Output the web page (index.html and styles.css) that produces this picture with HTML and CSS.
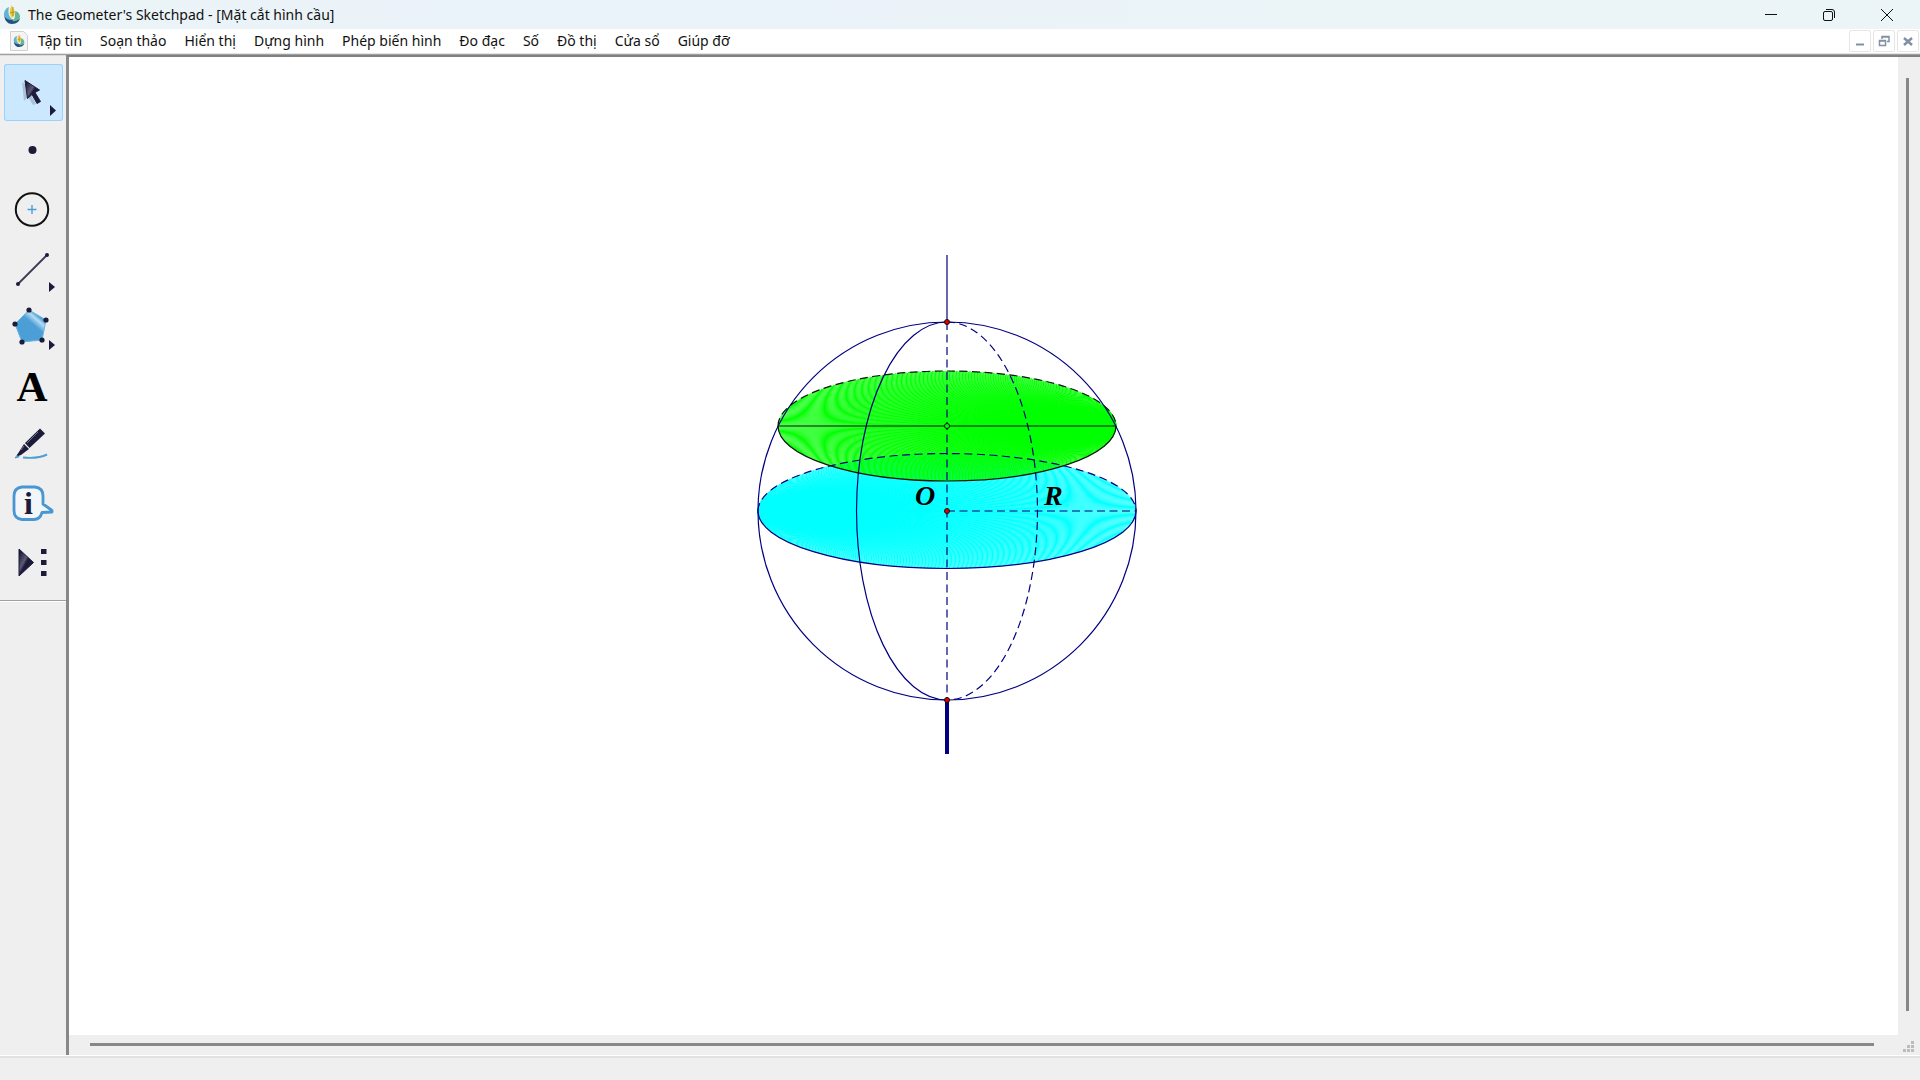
FILE: index.html
```html
<!DOCTYPE html>
<html lang="vi">

<head>
    <meta charset="UTF-8">
    <meta name="viewport" content="width=device-width, initial-scale=1.0">
    <title>The Geometer's Sketchpad - [Mặt cắt hình cầu]</title>
    <link rel="stylesheet" href="styles.css">
</head>

<body>
    <svg class="defs" width="0" height="0" aria-hidden="true">
        <defs>
            <linearGradient id="dark" x1="0" y1="0" x2="1" y2="1">
                <stop offset="0.1" stop-color="#1d1b3a" />
                <stop offset="0.4" stop-color="#5d5c72" />
                <stop offset="0.5" stop-color="#1d1b3a" />
            </linearGradient>
            <linearGradient id="penta" x1="0.9" y1="0" x2="0.4" y2="0.6">
                <stop offset="0.3" stop-color="#4c9fd6" />
                <stop offset="0.45" stop-color="#b5dcf3" />
                <stop offset="0.7" stop-color="#4c9fd6" />
            </linearGradient>
            <symbol id="logo" viewBox="0 0 18 20">
                <path d="M2 8C0 14 4 19 9 19c5 0 8-3 8-7 0 2-3 4-6 3C7 14 4 12 2 8z" fill="#24507f" />
                <path d="M1 9c0-3 2-6 5-7-1 5-1 9 4 13C5 15 1 13 1 9z" fill="#63b3d3" />
                <path d="M11 6c4 0 6 3 6 6-1 3-4 5-8 4 3-2 4-5 2-10z" fill="#62b79a" />
                <path d="M9 0c-3 5-3 9 0 13 2-1 3-3 2-6l2 2c-1-4-4-5-4-9z" fill="#efcc30" />
                <path d="M7 8l4-1M10 2v9" stroke="#b49224" fill="none" />
            </symbol>
        </defs>
    </svg>

    <header class="title-bar">
        <svg class="app-icon" width="18" height="20"><use href="#logo" /></svg>
        <h1>The Geometer's Sketchpad - [Mặt cắt hình cầu]</h1>
        <div class="window-buttons">
            <button type="button" aria-label="Minimize">
                <svg width="14" height="14" viewBox="0 0 14 14"><path d="M1 6.5h12" /></svg>
            </button>
            <button type="button" aria-label="Restore">
                <svg width="14" height="14" viewBox="0 0 14 14">
                    <rect x="1.5" y="3.5" width="9" height="9" rx="1.5" />
                    <path d="M4 1.5h6a2.5 2.5 0 0 1 2.5 2.5v6" />
                </svg>
            </button>
            <button type="button" aria-label="Close">
                <svg width="14" height="14" viewBox="0 0 14 14"><path d="M1 1l12 12M13 1L1 13" /></svg>
            </button>
        </div>
    </header>

    <nav class="menu-bar">
        <svg class="doc-icon" width="18" height="20" viewBox="0 0 18 20">
            <path d="M.5.5h13l4 4v15H.5z" fill="#f4f4f4" stroke="#d0d0d0" />
            <use href="#logo" x="3" y="3" width="12" height="14" />
        </svg>
        <button type="button">Tập tin</button>
        <button type="button">Soạn thảo</button>
        <button type="button">Hiển thị</button>
        <button type="button">Dựng hình</button>
        <button type="button">Phép biến hình</button>
        <button type="button">Đo đạc</button>
        <button type="button">Số</button>
        <button type="button">Đồ thị</button>
        <button type="button">Cửa sổ</button>
        <button type="button">Giúp đỡ</button>
        <div class="doc-buttons">
            <button type="button" aria-label="Thu nhỏ">
                <svg width="12" height="12" viewBox="0 0 12 12"><path d="M2 9.5h8" stroke-width="2" /></svg>
            </button>
            <button type="button" aria-label="Khôi phục">
                <svg width="12" height="12" viewBox="0 0 12 12">
                    <path d="M4 4V1.5h7v5H9M1.5 5.5h6v5h-6zM1 6h7M4 2h7" stroke-width="1.5" />
                </svg>
            </button>
            <button type="button" aria-label="Đóng">
                <svg width="12" height="12" viewBox="0 0 12 12"><path d="M2 3l8 7M10 3l-8 7" stroke-width="2.5" /></svg>
            </button>
        </div>
    </nav>

    <main class="workspace">
        <aside class="toolbox">
            <div class="tools">
                <button type="button" class="active" aria-label="Chọn">
                    <svg viewBox="0 0 59 57">
                        <path class="shadow" d="M18 18l13 10-4 3 5 9-3 1-5-8-4 4z" />
                        <path d="M21 16.5l14.5 9.5-4.5 2.5 5.5 9-3.5 2-5-9-4.5 4z" fill="url(#dark)" stroke="#1d1b3a" />
                        <path class="ink" d="M46 41l6 5.5-6 5.5z" />
                    </svg>
                </button>
                <button type="button" aria-label="Điểm">
                    <svg viewBox="0 0 59 57"><circle class="ink" cx="28.5" cy="27" r="4" /></svg>
                </button>
                <button type="button" aria-label="Đường tròn">
                    <svg viewBox="0 0 59 57">
                        <circle cx="28" cy="27.5" r="16.2" fill="none" stroke="#111" stroke-width="2" />
                        <path d="M23.5 27.5h9M28 23v9" stroke="#4c9fd6" stroke-width="1.4" />
                    </svg>
                </button>
                <button type="button" aria-label="Đoạn thẳng">
                    <svg viewBox="0 0 59 57">
                        <path d="M14 43l29-29" stroke="#3b3956" stroke-width="1.8" />
                        <circle class="ink" cx="14" cy="43" r="2" />
                        <circle class="ink" cx="43" cy="14" r="2" />
                        <path class="ink" d="M45 41l6 5-6 5z" />
                    </svg>
                </button>
                <button type="button" aria-label="Đa giác">
                    <svg viewBox="0 0 59 57">
                        <path d="M25 10l17 10-4 20-20 2-7-18z" fill="url(#penta)" stroke="#6bb2e0" />
                        <circle class="ink" cx="25" cy="10" r="2.6" />
                        <circle class="ink" cx="42" cy="20" r="2.6" />
                        <circle class="ink" cx="38" cy="40" r="2.6" />
                        <circle class="ink" cx="18" cy="42" r="2.6" />
                        <circle class="ink" cx="11" cy="24" r="2.6" />
                        <path class="ink" d="M45 40l6 5-6 5z" />
                    </svg>
                </button>
                <button type="button" aria-label="Văn bản">
                    <svg viewBox="0 0 59 57"><text class="letter" x="28" y="42" font-size="43">A</text></svg>
                </button>
                <button type="button" aria-label="Bút đánh dấu">
                    <svg viewBox="0 0 59 57">
                        <path d="M19 39.5c10 1 18 0 24-3" fill="none" stroke="#4c9fd6" stroke-width="2" />
                        <path d="M14 36l-3 4 4-1z" fill="#4c9fd6" stroke="#4c9fd6" />
                        <path class="ink" d="M36 10.500l5 5L25.5 30 21 25z" />
                        <path class="ink" d="M20 26l5 5-8 6-3 1-1-1z" />
                        <path d="M34 14L23 25M20 28l-3 4" stroke="#77768a" />
                    </svg>
                </button>
                <button type="button" aria-label="Thông tin">
                    <svg viewBox="0 0 59 57">
                        <path d="M18 10h13q8 1 8 9v8l9 6.5v1.5l-10 .5q-2 7-8 7H18q-8-1-8-9V19q0-8 8-9z" fill="#f3f6f8" stroke="#4896d2" stroke-width="2.8" stroke-linejoin="round" />
                        <text class="letter info" x="24.5" y="37" font-size="32">i</text>
                    </svg>
                </button>
                <button type="button" aria-label="Công cụ tùy chọn">
                    <svg viewBox="0 0 59 57">
                        <path d="M15 13l14.5 13.5L15 40z" fill="url(#dark)" stroke="#1d1b3a" />
                        <path class="ink" d="M37 13h5.5v5H37zM37 24h5.5v5H37zM37 35h5.5v5H37z" />
                    </svg>
                </button>
            </div>
        </aside>

        <section class="document">
            <svg class="sketch" role="img" aria-label="Mặt cắt hình cầu">
                <!-- origin is the centre O of the sphere -->
                <g transform="translate(878 454)">
                    <g id="cyanDisk" class="cyan"></g>
                    <g class="navy">
                        <path d="M-189 0a189 57.500 0 0 0 378 0" />
                    </g>
                    <g id="greenDisk" class="green"></g>
                    <g class="navy">
                        <path class="dashed" d="M-189 0a189 57.500 0 0 1 378 0" />
                        <path class="dashed" d="M0 0h189" />
                        <path class="dashed" d="M0-189v378" />
                        <path class="dashed" d="M0-189a90.500 189 0 0 1 0 378" />
                        <path d="M0-189a90.500 189 0 0 0 0 378" />
                        <circle r="189" />
                        <path d="M0-256v67" />
                        <path class="thick" d="M0 189v54" />
                    </g>
                    <g class="black">
                        <path class="dashed" d="M-169-85a169 55 0 0 1 338 0" />
                        <path d="M-169-85a169 55 0 0 0 338 0" />
                        <path d="M-169-85h338" />
                    </g>
                    <circle class="point" cy="-189" r="2.5" />
                    <circle class="point" r="2.5" />
                    <circle class="point" cy="189" r="2.5" />
                    <circle class="point mid" cy="-85" r="2.5" />
                    <text class="label" x="-32" y="-6">O</text>
                    <text class="label" x="97" y="-6">R</text>
                </g>
            </svg>
            <div class="scroll-y"><div class="thumb"></div></div>
            <div class="scroll-x"><div class="thumb"></div></div>
            <svg class="grip" width="12" height="12" viewBox="0 0 12 12">
                <path d="M8 0h3v3H8zM4 4h3v3H4zM8 4h3v3H8zM0 8h3v3H0zM4 8h3v3H4zM8 8h3v3H8z" />
            </svg>
        </section>
    </main>

    <footer class="status-bar"></footer>

    <script src="script.js"></script>
</body>

</html>
```

FILE: styles.css
```css
body {
    margin: 0;
    height: 100vh;
    display: flex;
    flex-direction: column;
    overflow: hidden;
    background-color: #efefef;
    color: #111;
    font-family: "Noto Sans", "Open Sans", sans-serif;
}

button {
    padding: 0;
    border: none;
    background: none;
    color: inherit;
    font: inherit;
}

.defs {
    position: absolute;
}

/* title */
.title-bar {
    display: flex;
    align-items: center;
    height: 29px;
    padding: 0 4px 0 3px;
    background: linear-gradient(90deg, #ebf4f6, #eaf2fa 30%, #ebf4f7 70%);
}

.title-bar h1 {
    flex: 1;
    margin: 0 0 0 7px;
    font-size: 14px;
    font-weight: normal;
    line-height: 28px;
}

.window-buttons {
    display: flex;
}

.window-buttons button {
    width: 58px;
    height: 28px;
}

.window-buttons svg {
    display: block;
    margin: 0 auto;
    fill: none;
    stroke: #111;
}

/* menu */
.menu-bar {
    display: flex;
    align-items: center;
    gap: 18px;
    height: 24px;
    padding-left: 10px;
    background-color: white;
    border-bottom: 1px solid #e4e4e4;
    font-size: 14px;
    line-height: 22px;
    white-space: nowrap;
}

.doc-icon {
    margin-right: -8px;
}

.doc-buttons {
    display: flex;
    gap: 2px;
    margin-left: auto;
    padding-right: 1px;
}

.doc-buttons button {
    width: 22px;
    height: 22px;
    border: 1px solid #e6e6e6;
    border-radius: 2px;
}

.doc-buttons svg {
    display: block;
    margin: 0 auto;
    fill: none;
    stroke: #8190a2;
}

/* tools */
.workspace {
    flex: 1;
    display: flex;
    min-height: 0;
    border-top: 1px solid #a0a0a0;
}

.toolbox {
    width: 66px;
    border-top: 1px solid #dcdcdc;
    border-bottom: 1px solid #a0a0a0;
}

.tools {
    display: flex;
    flex-direction: column;
    gap: 2px;
    padding: 8px 3px 7px 4px;
    border-bottom: 1px solid #a0a0a0;
    box-shadow: 0 1px white;
}

.tools button {
    width: 59px;
    height: 57px;
    border-radius: 3px;
}

.tools button.active {
    background-color: #cce8ff;
    box-shadow: inset 0 0 0 1px #99d1ff;
}

.tools svg {
    display: block;
    width: 59px;
    height: 57px;
}

.ink {
    fill: #1d1b3a;
}

.shadow {
    fill: #8fa9bd;
    opacity: 0.6;
}

.letter {
    font-family: "Liberation Serif", serif;
    font-weight: bold;
    text-anchor: middle;
}

.letter.info {
    fill: #1d1b3a;
}

/* document */
.document {
    flex: 1;
    display: grid;
    grid-template-columns: 1fr 22px;
    grid-template-rows: 1fr 21px;
    border-top: 2px solid #808080;
    border-left: 3px solid #888;
}

.sketch {
    width: 100%;
    height: 100%;
    background-color: white;
}

.scroll-y {
    padding: 21px 0 24px 8px;
}

.scroll-y .thumb {
    width: 3px;
    height: 100%;
    background-color: #888;
}

.scroll-x {
    padding: 8px 24px 0 21px;
}

.scroll-x .thumb {
    height: 3px;
    background-color: #888;
}

.grip {
    align-self: end;
    justify-self: center;
    padding-bottom: 3px;
    fill: #bcbcbc;
}

/* figure */
.navy,
.black {
    fill: none;
    stroke: #000080;
    stroke-width: 1.2;
}

.black {
    stroke: #111;
}

.dashed {
    stroke-dasharray: 8 4.5;
}

.navy .thick {
    stroke-width: 4;
}

.cyan {
    stroke: #00ffff;
}

.green {
    stroke: #00ff00;
}

.point {
    fill: #e00000;
    stroke: #111;
}

.point.mid {
    fill: #00ff00;
}

.label {
    font: italic bold 28px "Liberation Serif", serif;
}

/* status */
.status-bar {
    height: 22px;
    border-top: 2px solid #e2e2e2;
    box-shadow: 0 -1px white;
}
```

FILE: script.js
```js
// a disk is drawn as a locus: segments from one end of the ellipse to its points
function drawDisk(id, cy, rx, ry, side, samples) {
    const disk = document.getElementById(id);
    for (let i = 0; i < samples; i++) {
        const t = 2 * Math.PI * i / samples;
        const line = document.createElementNS("http://www.w3.org/2000/svg", "line");
        line.setAttribute("x1", side * rx);
        line.setAttribute("y1", cy);
        line.setAttribute("x2", rx * Math.cos(t));
        line.setAttribute("y2", cy + ry * Math.sin(t));
        disk.appendChild(line);
    }
}

drawDisk("cyanDisk", 0, 189, 57.5, -1, 310);
drawDisk("greenDisk", -85, 169, 55, 1, 310);
```
